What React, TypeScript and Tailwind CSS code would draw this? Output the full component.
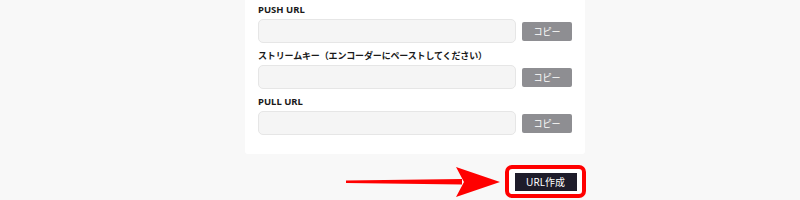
const fields = [
  { label: 'PUSH URL', cls: 'text-[9.5px]' },
  { label: 'ストリームキー（エンコーダーにペーストしてください）', cls: 'text-[9px] tracking-[-0.15px]' },
  { label: 'PULL URL', cls: 'text-[9.5px]' },
];

function Field({ label, cls }: { label: string; cls: string }) {
  return (
    <div className="flex flex-col">
      <p className={`${cls} font-bold leading-[12px] text-[#1a1a1a]`}>{label}</p>
      <div className="mt-[3px] flex items-center gap-[6px]">
        <div className="h-[24px] w-[259px] rounded-[5px] border border-[#e6e6e6] bg-[#f5f5f5]" />
        <button
          type="button"
          className="h-[19px] w-[50px] rounded-[2px] bg-[#8e8e92] text-[9px] leading-[19px] text-white"
        >
          コピー
        </button>
      </div>
    </div>
  );
}

function Arrow() {
  return (
    <svg width="156" height="34" viewBox="0 0 156 34" className="block">
      <path d="M0 15.5 L116 14 L116 19.5 L0 18 Z" fill="#ff0000" />
      <path d="M110 2 L154 17 L110 32 L118 17 Z" fill="#ff0000" />
    </svg>
  );
}

export default function App() {
  return (
    <div
      className="h-[200px] w-[800px] overflow-hidden bg-[#f8f8f8]"
      style={{ fontFamily: '"Noto Sans", "Noto Sans CJK JP", sans-serif' }}
    >
      <div className="ml-[245px] w-[340px] rounded-b-[3px] bg-white px-[13px] pb-[19px] pt-[4px]">
        <div className="flex flex-col gap-[7px]">
          {fields.map((f) => (
            <Field key={f.label} label={f.label} cls={f.cls} />
          ))}
        </div>
      </div>
      <div className="mt-[10px] flex items-center">
        <div className="ml-[346px] mt-[1px]">
          <Arrow />
        </div>
        <div className="ml-[3px] flex h-[33px] w-[81px] items-center justify-center rounded-[7px] border-[4px] border-[#ff0000] bg-white">
          <button
            type="button"
            className="h-[18px] w-[62px] bg-[#1e1c2a] text-[10px] leading-[18px] text-white"
          >
            URL作成
          </button>
        </div>
      </div>
    </div>
  );
}
